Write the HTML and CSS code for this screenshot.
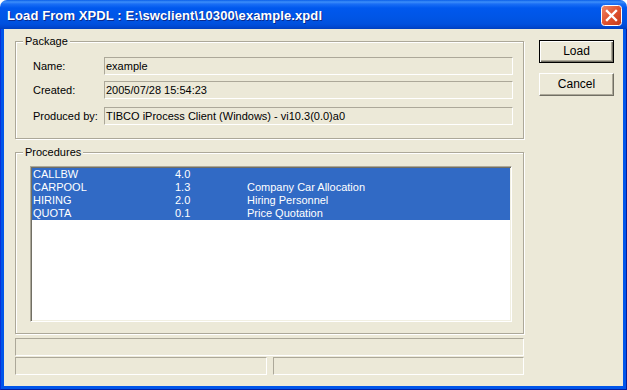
FILE: index.html
```html
<!DOCTYPE html>
<html>
<head>
<meta charset="utf-8">
<link rel="stylesheet" href="styles.css">
</head>
<body>
<div class="window">
  <div class="titlebar">
    <span class="title">Load From XPDL : E:\swclient\10300\example.xpdl</span>
    <div class="close">
      <svg width="21" height="21" viewBox="0 0 21 21">
        <defs>
          <linearGradient id="cg" x1="0" y1="0" x2="1" y2="1">
            <stop offset="0" stop-color="#f08a6c"/>
            <stop offset="0.5" stop-color="#e0532f"/>
            <stop offset="1" stop-color="#c2381a"/>
          </linearGradient>
        </defs>
        <rect x="0.5" y="0.5" width="20" height="20" rx="3" fill="url(#cg)" stroke="#ffffff"/>
        <path d="M6 6 L15 15 M15 6 L6 15" stroke="#ffffff" stroke-width="2.4" stroke-linecap="square"/>
      </svg>
    </div>
  </div>
  <div class="frame">
    <div class="client">
      <div class="left">
        <div class="group pkg">
          <span class="legend">Package</span>
          <div class="row r1"><span class="lbl">Name:</span><div class="field">example</div></div>
          <div class="row r2"><span class="lbl">Created:</span><div class="field">2005/07/28 15:54:23</div></div>
          <div class="row r3"><span class="lbl">Produced by:</span><div class="field">TIBCO iProcess Client (Windows) - vi10.3(0.0)a0</div></div>
        </div>
        <div class="group procs">
          <span class="legend">Procedures</span>
          <div class="list">
            <div class="item sel"><span class="c1">CALLBW</span><span class="c2">4.0</span><span class="c3"></span></div>
            <div class="item sel"><span class="c1">CARPOOL</span><span class="c2">1.3</span><span class="c3">Company Car Allocation</span></div>
            <div class="item sel"><span class="c1">HIRING</span><span class="c2">2.0</span><span class="c3">Hiring Personnel</span></div>
            <div class="item sel"><span class="c1">QUOTA</span><span class="c2">0.1</span><span class="c3">Price Quotation</span></div>
          </div>
        </div>
        <div class="panel full"></div>
        <div class="panelrow">
          <div class="panel half1"></div>
          <div class="panel half2"></div>
        </div>
      </div>
      <div class="buttons">
        <div class="btn default">Load</div>
        <div class="btn">Cancel</div>
      </div>
    </div>
  </div>
</div>
</body>
</html>
```
FILE: styles.css
```css
* {
  box-sizing: border-box;
}
html, body {
  margin: 0;
  padding: 0;
  background: #ffffff;
}
body {
  width: 627px;
  height: 390px;
  overflow: hidden;
  font-family: "Liberation Sans", Arial, sans-serif;
  font-size: 11px;
  color: #000;
}
.window {
  width: 627px;
  height: 390px;
  display: flex;
  flex-direction: column;
  border-radius: 7px 7px 0 0;
  overflow: hidden;
}
.titlebar {
  height: 29px;
  flex: none;
  display: flex;
  align-items: center;
  justify-content: space-between;
  padding: 0 5px 0 7px;
  background: linear-gradient(to bottom, #0a5ee8 0px, #3d8ffa 2px, #1a6ef5 4px, #0058ee 8px, #0055e5 18px, #0050de 24px, #0047d0 27px, #003fbd 29px);
}
.title {
  color: #fff;
  font-family: "Liberation Sans", Arial, sans-serif;
  font-weight: bold;
  font-size: 13px;
  letter-spacing: 0.1px;
  text-shadow: 1px 1px 0 #0a2a8c;
  padding-top: 1px;
}
.close {
  width: 21px;
  height: 21px;
  margin-top: 1px;
}
.close svg { display: block; }
.frame {
  flex: 1;
  background: #0055ea;
  border-left: 1px solid #0831d9;
  border-right: 1px solid #001ea0;
  border-bottom: 1px solid #001ea0;
  padding: 0 3px 3px 3px;
  display: flex;
}
.client {
  flex: 1;
  background: #ece9d8;
  display: flex;
  padding: 12px 9px 0 11px;
}
.left {
  width: 509px;
  display: flex;
  flex-direction: column;
}
.group {
  position: relative;
  border: 1px solid #aca899;
  box-shadow: inset 1px 1px 0 #ffffff, 1px 1px 0 #ffffff;
}
.legend {
  position: absolute;
  top: -8px;
  left: 7px;
  padding: 0 2px;
  background: #ece9d8;
  line-height: 14px;
}
.pkg {
  height: 98px;
  padding-top: 15px;
}
.row {
  display: flex;
  align-items: center;
  padding-left: 17px;
}
.r2 { margin-top: 6px; }
.r3 { margin-top: 8px; }
.lbl {
  width: 71px;
}
.field {
  width: 409px;
  height: 18px;
  border-top: 1px solid #aca899;
  border-left: 1px solid #aca899;
  border-right: 1px solid #ffffff;
  border-bottom: 1px solid #ffffff;
  padding-left: 1px;
  line-height: 16px;
}
.procs {
  margin-top: 13px;
  height: 182px;
  padding: 13px 0 0 14px;
}
.list {
  width: 482px;
  height: 156px;
  background: #fff;
  border-top: 1px solid #aca899;
  border-left: 1px solid #aca899;
  border-right: 1px solid #ffffff;
  border-bottom: 1px solid #ffffff;
  box-shadow: inset 1px 1px 0 #716f64, inset -1px -1px 0 #f1efe2;
  padding: 1px;
}
.item {
  display: flex;
  height: 13px;
  line-height: 13px;
  background: #316ac5;
  color: #fff;
}
.c1 { width: 143px; padding-left: 1px; }
.c2 { width: 72px; }
.c3 { flex: 1; }
.panel {
  height: 18px;
  border-top: 1px solid #aca899;
  border-left: 1px solid #aca899;
  border-right: 1px solid #ffffff;
  border-bottom: 1px solid #ffffff;
}
.full { margin-top: 4px; }
.panelrow {
  display: flex;
  gap: 6px;
  margin-top: 1px;
}
.half1 { width: 252px; }
.half2 { flex: 1; }
.buttons {
  margin-left: 15px;
  display: flex;
  flex-direction: column;
  gap: 10px;
  margin-top: -1px;
}
.btn {
  width: 75px;
  height: 23px;
  border: 1px solid;
  border-color: #ffffff #716f64 #716f64 #ffffff;
  box-shadow: inset -1px -1px 0 #aca899;
  background: #ece9d8;
  text-align: center;
  line-height: 20px;
  font-size: 12px;
}
.btn.default {
  border: 1px solid #000;
  box-shadow: inset 1px 1px 0 #fff, inset -1px -1px 0 #716f64, inset -2px -2px 0 #aca899;
}
```
